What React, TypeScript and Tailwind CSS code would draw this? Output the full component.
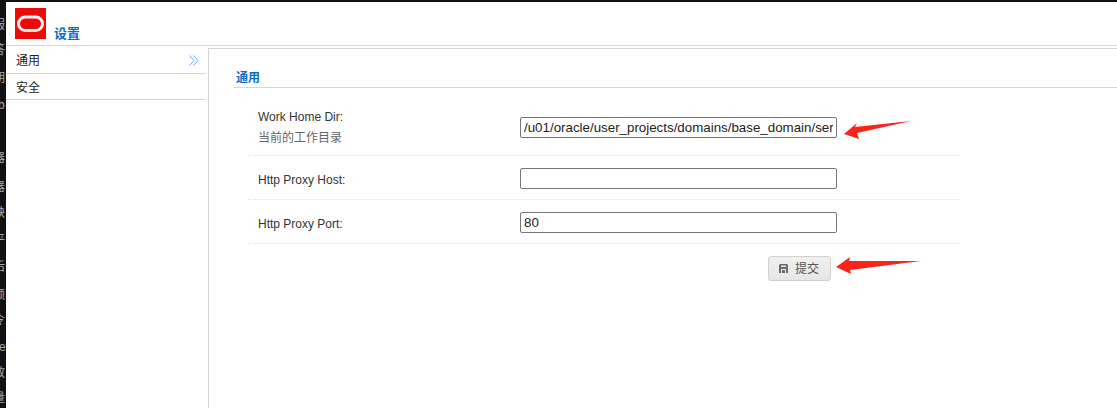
const font = "font-['Liberation_Sans','Noto_Sans_CJK_SC',sans-serif]"

const stripRows = [
	{ h: "h-[10px]", t: "", m: "" },
	{ h: "h-[25px]", t: "服", m: "ml-[-7px]" },
	{ h: "h-[28px]", t: "答", m: "ml-[-7px]" },
	{ h: "h-[27px]", t: "期", m: "ml-[-7px]" },
	{ h: "h-[53px]", t: "b", m: "ml-[-2px]" },
	{ h: "h-[29px]", t: "器", m: "ml-[-7px]" },
	{ h: "h-[26px]", t: "器", m: "ml-[-7px]" },
	{ h: "h-[27px]", t: "缺", m: "ml-[-7px]" },
	{ h: "h-[27px]", t: "平", m: "ml-[-7px]" },
	{ h: "h-[28px]", t: "后", m: "ml-[-7px]" },
	{ h: "h-[25px]", t: "额", m: "ml-[-7px]" },
	{ h: "h-[27px]", t: "令", m: "ml-[-7px]" },
	{ h: "h-[26px]", t: "e", m: "ml-[-1px]" },
	{ h: "h-[25px]", t: "效", m: "ml-[-7px]" },
	{ h: "h-[26px]", t: "量", m: "ml-[-7px]" },
]

const Logo = () => (
	<svg width="31" height="31" viewBox="0 0 31 31" className="shrink-0">
		<rect width="31" height="31" fill="#ea0a0a" />
		<rect x="3.5" y="9" width="24" height="13.5" rx="6.75" fill="none" stroke="#fdf0ee" strokeWidth="3" />
	</svg>
)

const Field = ({ label, hint, value }: { label: string; hint?: string; value: string }) => (
	<div className={`flex items-center border-b border-dotted border-[#e2e2e2] pl-[10px] ${hint ? "h-[67px] pt-[11px]" : "h-[44px] pt-[2px]"}`}>
		<div className={`w-[262px] text-xs leading-[21px] text-[#333333] ${hint ? "" : "pt-[3px]"}`}>
			<div>{label}</div>
			{hint && <div className="text-[#666666]">{hint}</div>}
		</div>
		<input
			readOnly
			value={value}
			className="h-[21px] w-[317px] rounded-[2px] border border-[#767676] bg-white px-[3px] text-[13.33px] text-[#222222] outline-none"
		/>
	</div>
)

export default function App() {
	return (
		<div className={`relative flex h-[408px] w-[1117px] overflow-hidden bg-[#111114] ${font}`}>
			<div className="flex w-[6px] shrink-0 flex-col overflow-hidden pt-[2px] text-xs text-[#a8a8a8]">
				{stripRows.map((r, i) => (
					<div key={i} className={`${r.h} ${r.m} w-[14px] shrink-0 leading-[26px]`}>
						{r.t}
					</div>
				))}
			</div>
			<div className="mt-[2px] flex min-w-0 flex-1 flex-col bg-white">
				<div className="flex h-[44px] shrink-0 items-end border-b border-[#d6d6d6] pb-[6px] pl-[9px]">
					<Logo />
					<h1 className="mb-[-4px] ml-[8px] text-[13px] leading-[18px] font-bold text-[#0a6ccb]">设置</h1>
				</div>
				<div className="flex flex-1">
					<div className="w-[200px] shrink-0 text-xs text-[#222222]">
						<div className="flex h-[28px] items-center justify-between border-b border-[#d6d6d6] pt-[2px] pr-[7px] pl-[10px]">
							<span>通用</span>
							<svg width="10" height="11" viewBox="0 0 10 11" fill="none" stroke="#62a8ee" strokeWidth="1">
								<path d="M0.5 0.5 L5 5.5 L0.5 10.5" />
								<path d="M4.5 0.5 L9 5.5 L4.5 10.5" />
							</svg>
						</div>
						<div className="flex h-[26px] items-center border-b border-[#d6d6d6] pt-[2px] pl-[10px]">安全</div>
					</div>
					<div className="mt-[2px] ml-[2px] flex-1 border-t border-l border-[#d6d6d6] pt-[22px] pl-[25px]">
						<div className="h-[17px] border-b border-[#d6d6d6] pl-[2px] text-xs leading-[14px] font-bold text-[#0a6ccb]">
							通用
						</div>
						<div className="mt-[1px] box-content w-[712px] pl-[14px]">
							<Field label="Work Home Dir:" hint="当前的工作目录" value="/u01/oracle/user_projects/domains/base_domain/servers" />
							<Field label="Http Proxy Host:" value="" />
							<Field label="Http Proxy Port:" value="80" />
							<div className="flex justify-end pt-[12px] pr-[129px]">
								<button className="flex h-[25px] w-[63px] items-center justify-center gap-[7px] rounded-[3px] border border-[#d0d0d0] bg-gradient-to-b from-[#f0f0f0] to-[#e6e6e6] pr-[1px] text-xs text-[#555555]">
									<svg width="9" height="9" viewBox="0 0 9 9">
										<path d="M1 0H8L9 1V9H0V1Z" fill="#6b6b6b" />
										<rect x="2" y="1.5" width="5" height="1.5" fill="#e8e8e8" />
										<rect x="2" y="5" width="5" height="4" fill="#e8e8e8" />
										<rect x="3" y="6" width="3" height="3" fill="#6b6b6b" />
									</svg>
									提交
								</button>
							</div>
						</div>
					</div>
				</div>
			</div>
			<svg width="1117" height="408" viewBox="0 0 1117 408" className="pointer-events-none absolute top-0 left-0">
				<polygon points="844,134 857,123 855,127 911,121 857,133 859,139" fill="#f9241a" />
				<polygon points="836,267 850,257 849,261 921,261 850,270 851,274" fill="#f9241a" />
			</svg>
		</div>
	)
}
